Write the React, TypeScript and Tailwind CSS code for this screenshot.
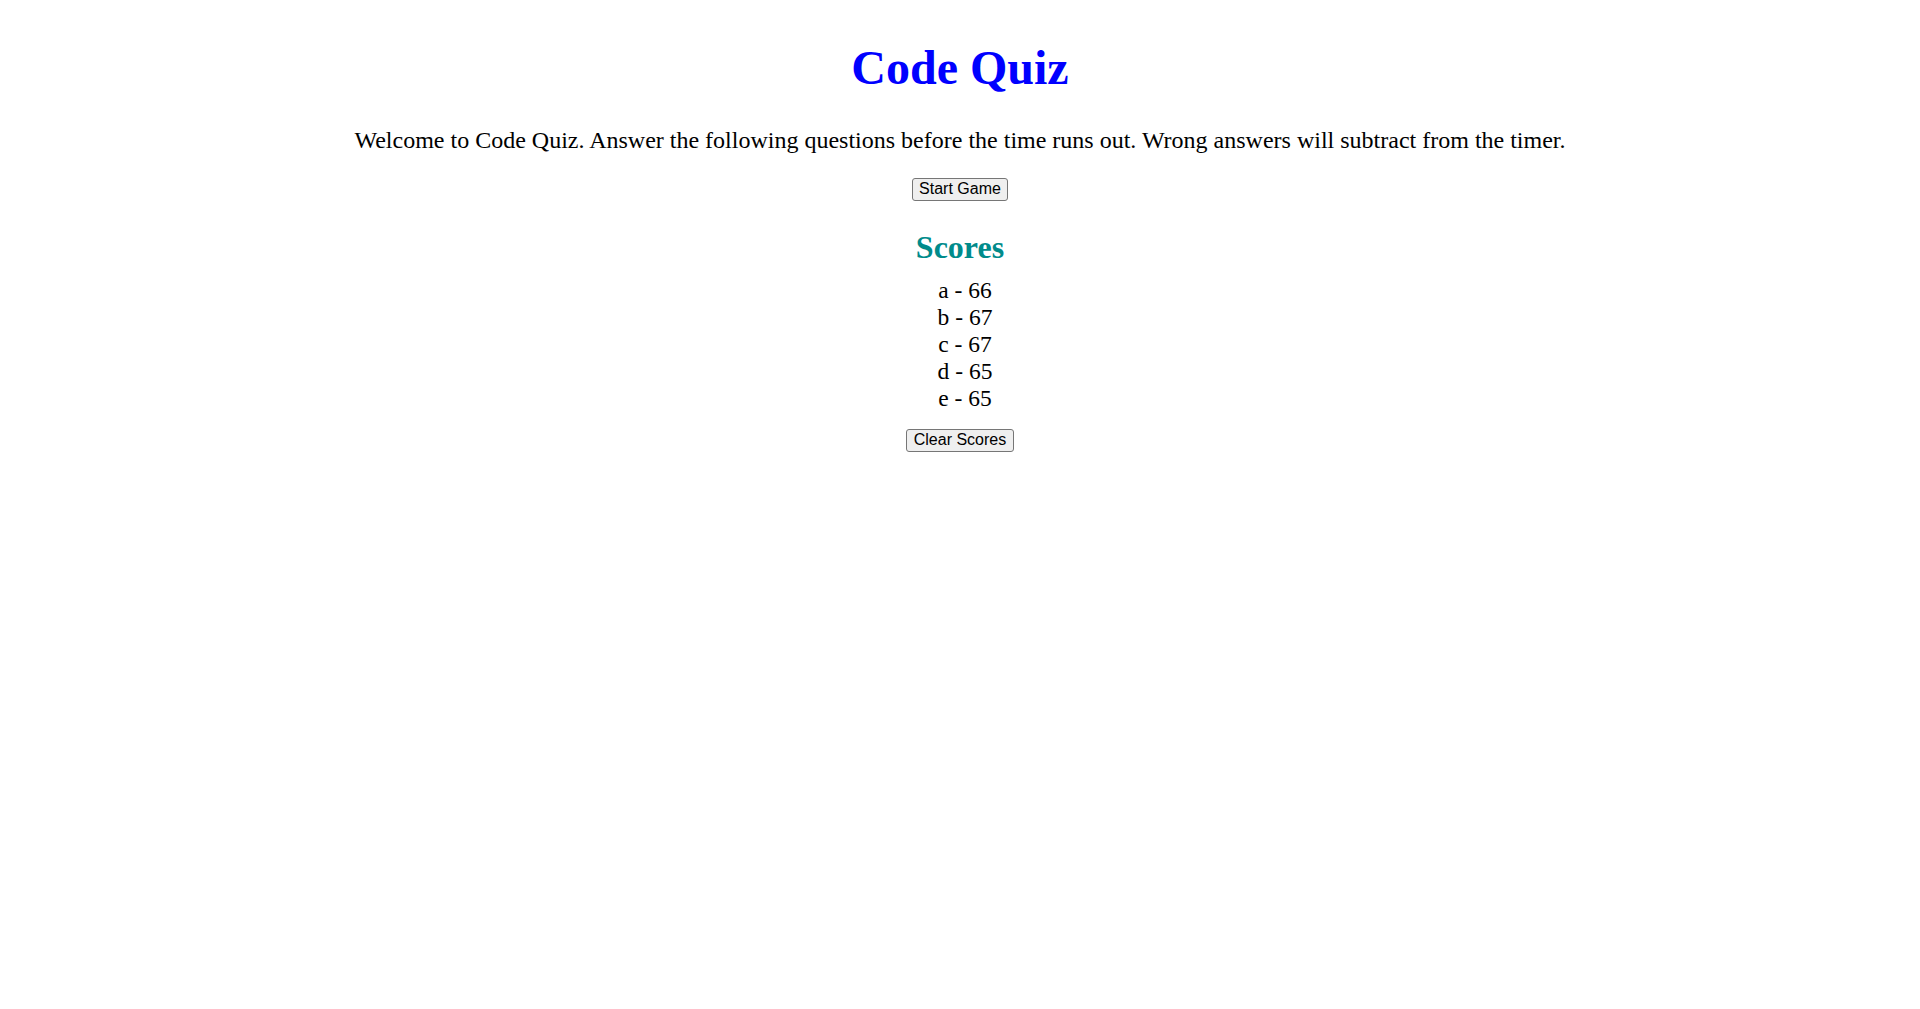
const scores = [
  { initials: 'a', score: 66 },
  { initials: 'b', score: 67 },
  { initials: 'c', score: 67 },
  { initials: 'd', score: 65 },
  { initials: 'e', score: 65 },
];

function OldButton({ children }: { children: React.ReactNode }) {
  return (
    <button
      type="button"
      className="border border-[#767676] bg-[#efefef] rounded-[3px] px-[6.5px] py-[1.5px] text-[16px] leading-[1.15] text-black font-['Arial','Liberation_Sans',sans-serif]"
    >
      {children}
    </button>
  );
}

export default function App() {
  return (
    <div className="min-h-[1009px] bg-white text-black text-center font-['Times_New_Roman','Liberation_Serif',serif] pt-[40px]">
      <h1 className="text-[48px] leading-[1.15] font-bold text-[#0000ff]">Code Quiz</h1>

      <p className="mt-[32px] text-[24px] leading-[1.15]">
        Welcome to Code Quiz. Answer the following questions before the time runs out. Wrong answers will
        subtract from the timer.
      </p>

      <div className="mt-[23px] flex justify-center">
        <OldButton>Start Game</OldButton>
      </div>

      <h2 className="mt-[28px] text-[32px] leading-[1.15] font-bold text-[#008b8b]">Scores</h2>

      <ul className="mt-[11px] pl-[10px] text-[23.5px] leading-[27px]">
        {scores.map((s) => (
          <li key={s.initials}>
            {s.initials} - {s.score}
          </li>
        ))}
      </ul>

      <div className="mt-[17px] flex justify-center">
        <OldButton>Clear Scores</OldButton>
      </div>
    </div>
  );
}
